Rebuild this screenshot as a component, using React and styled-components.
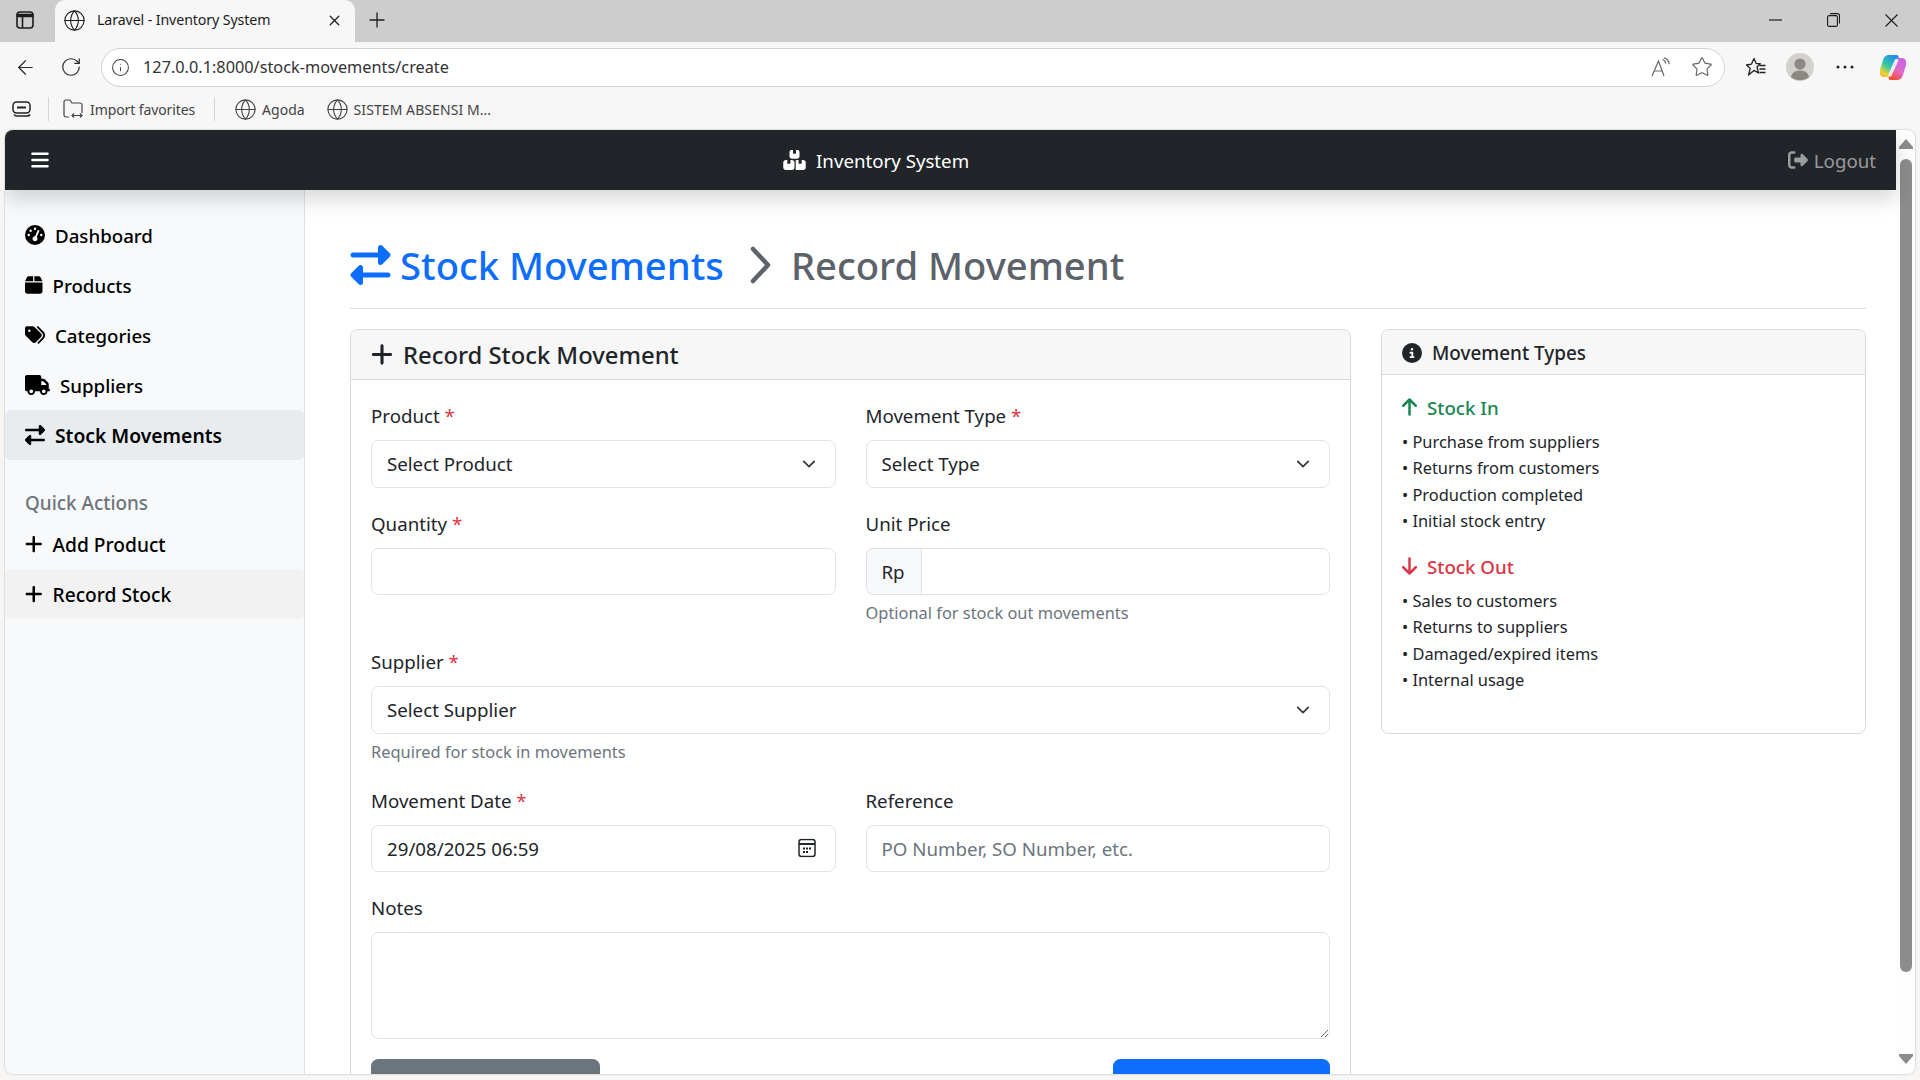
import React from 'react'
import styled, { createGlobalStyle } from 'styled-components'
import { ArrowLeft, Globe, Info, Plus, RotateCw, Star, X } from 'lucide-react'
import {
  FaArrowDown,
  FaArrowLeft,
  FaArrowUp,
  FaBars,
  FaBox,
  FaBoxesStacked,
  FaCircleInfo,
  FaFloppyDisk,
  FaGaugeHigh,
  FaPlus,
  FaRightFromBracket,
  FaRightLeft,
  FaTags,
  FaTruck,
} from 'react-icons/fa6'

const GlobalStyle = createGlobalStyle`
  * { box-sizing: border-box; }
  html, body {
    margin: 0;
    width: 1920px;
    height: 1080px;
    overflow: hidden;
    font-family: "Noto Sans", "Open Sans", sans-serif;
    color: #212529;
  }
`

const Window = styled.div`
  width: 1920px;
  height: 1080px;
  display: flex;
  flex-direction: column;
  background: #f7f6f5;
  overflow: hidden;
`

const TabStrip = styled.div`
  height: 42px;
  flex: none;
  display: flex;
  align-items: center;
  padding-left: 16px;
  background: #cdcdcd;
  color: #1c1c1c;
`

const TabToggle = styled.span`
  display: flex;
  width: 39px;
  padding-bottom: 2px;
`

const Tab = styled.div`
  width: 300px;
  height: 42px;
  display: flex;
  align-items: center;
  padding: 0 12px 2px 8px;
  background: #f7f7f7;
  border-radius: 10px 10px 0 0;
`

const TabTitle = styled.span`
  flex: 1;
  margin: 0 0 1px 11px;
  font-size: 14.2px;
  letter-spacing: -0.1px;
`

const NewTab = styled.span`
  display: flex;
  margin-left: 10px;
  padding-bottom: 2px;
`

const WindowControls = styled.div`
  margin-left: auto;
  display: flex;
  gap: 45px;
  padding: 0 22px 2px 0;
  align-items: center;
`

const Toolbar = styled.div`
  height: 46px;
  flex: none;
  display: flex;
  align-items: center;
  padding: 4px 0 0 14px;
  background: #f7f7f7;
  color: #2b2b2b;
`

const ToolButton = styled.span`
  display: flex;
  margin-left: ${(p) => p.$before || 0}px;
  margin-right: ${(p) => p.$gap || 0}px;
`

const AddressBar = styled.div`
  width: 1624px;
  height: 39px;
  display: flex;
  align-items: center;
  padding: 0 11px 0 9px;
  background: #fff;
  border: 1.5px solid #d2d2d2;
  border-radius: 20px;
`

const Url = styled.span`
  flex: 1;
  margin-left: 13px;
  font-size: 16.3px;
  color: #333;
`

const BarIcons = styled.div`
  display: flex;
  align-items: center;
  gap: 20px;
  color: #666;
`

const ToolIcons = styled.div`
  display: flex;
  align-items: center;
  margin-left: 20px;
`

const Bookmarks = styled.div`
  height: 42px;
  flex: none;
  display: flex;
  align-items: center;
  padding-left: 12px;
  background: #f7f7f7;
  color: #444;
`

const Divider = styled.span`
  width: 1px;
  height: 24px;
  background: #d4d4d4;
  margin: 0 ${(p) => p.$right}px 0 ${(p) => p.$left}px;
`

const Bookmark = styled.span`
  display: flex;
  align-items: center;
  gap: ${(p) => p.$iconGap || 7}px;
  font-size: 14px;
  letter-spacing: ${(p) => p.$track ?? -0.1}px;
  margin-right: ${(p) => p.$gap || 0}px;
`

const PageFrame = styled.div`
  width: 1910px;
  height: 944px;
  flex: none;
  margin-left: 5px;
  display: flex;
  background: #fff;
  border-radius: 8px;
  overflow: hidden;
  box-shadow: 0 0 2px rgba(0, 0, 0, 0.35);
`

const Viewport = styled.div`
  width: 1891px;
  display: flex;
  flex-direction: column;
`

const ScrollTrack = styled.div`
  width: 19px;
  display: flex;
  flex-direction: column;
  align-items: center;
  padding: 9px 0 10px;
  background: #fdfdfd;
  color: #8c8c8c;
`

const ScrollThumb = styled.div`
  width: 12px;
  height: 813px;
  margin-top: 10px;
  border-radius: 6px;
  background: #8c8c8c;
`

const ScrollArrow = styled.svg`
  width: 14px;
  height: 10px;
  margin-top: ${(p) => (p.$down ? 'auto' : 0)};
`

const Navbar = styled.nav`
  height: 60px;
  flex: none;
  position: relative;
  z-index: 2;
  display: flex;
  align-items: center;
  padding: 0 20px 0 26px;
  background: #212529;
  box-shadow: 0 10px 20px rgba(0, 0, 0, 0.15);
  color: rgba(255, 255, 255, 0.55);
  font-size: 18.7px;
`

const Toggler = styled.span`
  display: flex;
  color: #fff;
  svg { width: 18px; height: 20px; }
`

const Brand = styled.span`
  display: flex;
  align-items: center;
  gap: 10px;
  margin-left: 734px;
  color: #fff;
  svg { width: 23px; height: 20px; }
`

const Logout = styled.span`
  display: flex;
  align-items: center;
  gap: 5px;
  margin-left: auto;
  svg { width: 22px; height: 20px; }
`

const Columns = styled.div`
  flex: 1;
  display: flex;
  min-height: 0;
`

const Sidebar = styled.aside`
  width: 300px;
  flex: none;
  padding-top: 20px;
  background: #f8f9fa;
  border-right: 1px solid #dee2e6;
`

const NavLink = styled.a`
  height: 50px;
  display: flex;
  align-items: center;
  gap: 10px;
  padding-left: 20px;
  border-radius: 5px;
  color: #000;
  font-size: ${(p) => p.$size || 18.7}px;
  font-weight: ${(p) => (p.$active ? 600 : 500)};
  background: ${(p) => p.$bg || 'transparent'};
  svg { width: ${(p) => p.$iconWidth || 20}px; height: 20px; flex: none; }
`

const SideHeading = styled.div`
  margin: 28px 0 1px;
  padding-left: 20px;
  height: 30px;
  line-height: 30px;
  color: #6c757d;
  font-size: 18.9px;
  font-weight: 500;
`

const Main = styled.main`
  flex: 1;
  min-width: 0;
  padding: 52px 30px 0 45px;
`

const PageHeader = styled.div`
  display: flex;
  align-items: center;
  height: 67px;
  padding-bottom: 20px;
  border-bottom: 1px solid #dee2e6;
  margin-bottom: 20px;
  font-size: 38.2px;
  font-weight: 500;
  line-height: 46px;
`

const Crumb = styled.span`
  display: flex;
  align-items: center;
  gap: 9px;
  color: #0d6efd;
  svg { width: 41px; height: 40px; }
`

const Chevron = styled.svg`
  width: 24px;
  height: 38px;
  margin: 0 18px 0 25px;
`

const Current = styled.span`
  color: #5c636a;
`

const Grid = styled.div`
  display: grid;
  grid-template-columns: 1001px 485px;
  gap: 30px;
  align-items: start;
`

const Card = styled.section`
  background: #fff;
  border: 1px solid #d9d9d9;
  border-radius: 7.5px;
  overflow: hidden;
`

const CardHeader = styled.div`
  height: ${(p) => (p.$big ? 50 : 45)}px;
  display: flex;
  align-items: center;
  gap: 10px;
  padding: ${(p) => (p.$big ? 0 : 1)}px 20px 0;
  background: #f7f7f7;
  border-bottom: 1px solid #d9d9d9;
  font-size: ${(p) => (p.$big ? 23.8 : 18.9)}px;
  font-weight: 500;
  svg {
    width: ${(p) => (p.$big ? 22 : 20)}px;
    height: ${(p) => (p.$big ? 25 : 20)}px;
    flex: none;
  }
`

const CardBody = styled.div`
  padding: 20px;
`

const FormRow = styled.div`
  display: grid;
  grid-template-columns: 1fr 1fr;
  column-gap: 30px;
`

const Field = styled.div`
  margin-bottom: 20px;
`

const Label = styled.label`
  display: block;
  height: 30px;
  line-height: 31px;
  margin-bottom: 10px;
  font-size: 18.7px;
`

const Required = styled.span`
  color: #dc3545;
`

const Control = styled.div`
  position: relative;
  display: flex;
`

const inputBase = `
  width: 100%;
  height: 47.5px;
  padding: 7.5px 15px;
  border: 1px solid #dee2e6;
  border-radius: 7.5px;
  background: #fff;
  color: #212529;
  font-family: inherit;
  font-size: 18.7px;
  outline: none;
`

const Select = styled.select`
  ${inputBase}
  appearance: none;
`

const Input = styled.input`
  ${inputBase}
  &::placeholder { color: #6c757d; opacity: 1; }
`

const GroupInput = styled(Input)`
  flex: 1;
  width: auto;
  min-width: 0;
  border-radius: 0 7.5px 7.5px 0;
`

const Addon = styled.span`
  width: 55px;
  flex: none;
  display: flex;
  align-items: center;
  padding-left: 15px;
  background: #f8f9fa;
  border: 1px solid #dee2e6;
  border-right: 0;
  border-radius: 7.5px 0 0 7.5px;
  font-size: 18.7px;
`

const TextArea = styled.textarea`
  ${inputBase}
  display: block;
  height: 107px;
  resize: vertical;
`

const ControlIcon = styled.svg`
  position: absolute;
  top: 50%;
  right: ${(p) => p.$right}px;
  transform: translateY(-50%);
  pointer-events: none;
`

const Help = styled.div`
  margin-top: 5px;
  height: 26px;
  line-height: 26px;
  font-size: 16.4px;
  color: #6c757d;
`

const Actions = styled.div`
  display: flex;
  justify-content: space-between;
`

const Button = styled.button`
  width: ${(p) => p.$width}px;
  height: 47.5px;
  display: flex;
  align-items: center;
  padding: 0 17px;
  border: 0;
  border-radius: 7.5px;
  background: ${(p) => p.$bg};
  color: #fff;
  svg { width: 18px; height: 20px; flex: none; }
`

const TypeHeading = styled.h6`
  margin: 0 0 10px;
  display: flex;
  align-items: center;
  gap: 10px;
  height: 24px;
  color: ${(p) => p.$color};
  font-size: 18.7px;
  font-weight: 500;
  svg { width: 15px; height: 20px; }
`

const TypeList = styled.ul`
  list-style: none;
  margin: 0 0 20px;
  padding: 0;
  font-size: 16.4px;
  line-height: 26.25px;
`

const GlobeIcon = () => <Globe size={23} strokeWidth={1.15} />

const TabsIcon = () => (
  <svg width="18" height="18" viewBox="0 0 18 18" fill="none" stroke="#1c1c1c" strokeWidth="1.6">
    <rect x="1" y="1" width="16" height="16" rx="3" />
    <path d="M1.5 3.5h15v2h-15z" fill="#1c1c1c" />
    <path d="M6.5 5v12" />
  </svg>
)

const MinimizeIcon = () => (
  <svg width="13" height="2" viewBox="0 0 13 2"><path d="M0 1h13" stroke="#1c1c1c" strokeWidth="1.2" /></svg>
)

const RestoreIcon = () => (
  <svg width="13" height="14" viewBox="0 0 13 14" fill="none" stroke="#1c1c1c" strokeWidth="1.1">
    <rect x="0.6" y="2.6" width="9.8" height="10.8" rx="1.5" />
    <path d="M3 .6h7.5a2 2 0 0 1 2 2v8" />
  </svg>
)

const CloseIcon = () => (
  <svg width="13" height="13" viewBox="0 0 13 13" stroke="#1c1c1c" strokeWidth="1.1">
    <path d="M.5.5l12 12M12.5.5l-12 12" />
  </svg>
)

const ReadAloudIcon = () => (
  <svg width="20" height="20" viewBox="0 0 20 20" fill="none" stroke="#666" strokeWidth="1.2">
    <path d="M1 19L7.5 4 13 19M3.2 14h8" />
    <path d="M11.5 2.5c2 .6 3 2 3.2 4M13 .8c3 .8 5 3 5.2 6.4" />
  </svg>
)

const FavoritesIcon = () => (
  <svg width="21" height="21" viewBox="0 0 21 21" fill="none" stroke="#222" strokeWidth="1.3" strokeLinejoin="round">
    <path d="M9 1.5l2.3 5.2h4L12 10l1.500 6L9 13.400 3.500 18l1.800-6.600L1.500 8l5-.9z" />
    <path d="M14.500 8.500h6M14.500 12h6M14.500 15.500h6" />
  </svg>
)

const AvatarIcon = () => (
  <svg width="28" height="28" viewBox="0 0 28 28">
    <circle cx="14" cy="14" r="14" fill="#d3d1cd" />
    <circle cx="14" cy="11" r="5.6" fill="#8c8984" />
    <path d="M5 24c1-4.500 4.500-6.500 9-6.500s8 2 9 6.500a14 14 0 0 1-18 0z" fill="#8c8984" />
  </svg>
)

const DotsIcon = () => (
  <svg width="18" height="4" viewBox="0 0 18 4" fill="#222">
    <circle cx="2" cy="2" r="1.5" /><circle cx="9" cy="2" r="1.5" /><circle cx="16" cy="2" r="1.5" />
  </svg>
)

const CopilotIcon = () => (
  <svg width="28" height="27" viewBox="0 0 28 27">
    <defs>
      <linearGradient id="copA" x1="0.7" y1="0" x2="0.15" y2="1">
        <stop offset="0" stopColor="#1f8fee" />
        <stop offset="0.5" stopColor="#35c8a0" />
        <stop offset="0.85" stopColor="#f4d32c" />
        <stop offset="1" stopColor="#f6a83a" />
      </linearGradient>
      <linearGradient id="copB" x1="0.9" y1="0.1" x2="0.3" y2="1">
        <stop offset="0" stopColor="#c963e6" />
        <stop offset="0.55" stopColor="#e268c8" />
        <stop offset="1" stopColor="#f0502e" />
      </linearGradient>
    </defs>
    <path d="M10 1h7c2 0 3 1 2.600 2.500L13.500 18c-1 3-3 5-5.500 5H5c-3 0-5-3-4-7l3-10c.8-3 3-5 6-5z" fill="url(#copA)" />
    <path d="M18 26h-6c-2 0-2.800-1-2.400-2.500L15 9c1-3 3-5 5.500-5H23c3 0 5 3 4 7l-3 10c-.8 3-3 5-6 5z" fill="url(#copB)" />
    <path d="M17.500 6.500L11 21" stroke="#fff" strokeOpacity="0.85" strokeWidth="3.500" strokeLinecap="round" />
  </svg>
)

const SavedIcon = () => (
  <svg width="20" height="18" viewBox="0 0 20 18" fill="none" stroke="#222" strokeWidth="1.5">
    <rect x="1" y="2" width="17" height="11" rx="3.500" />
    <path d="M5 7.500h9" strokeWidth="2" />
    <path d="M2 14.500c.6 1.200 1.500 1.500 3 1.500h10c1.500 0 2.400-.5 3-1.500" />
  </svg>
)

const ImportIcon = () => (
  <svg width="20" height="20" viewBox="0 0 20 20" fill="none" stroke="#444" strokeWidth="1.2">
    <path d="M6 18H3a2 2 0 0 1-2-2V3a2 2 0 0 1 2-2h4l2 3h8a2 2 0 0 1 2 2v8" />
    <path d="M9 16.500h10M11 14.500l-2 2 2 2M17 14.500l2 2-2 2" />
  </svg>
)

const ChevronDown = () => (
  <ControlIcon $right={20} width="14" height="14" viewBox="0 0 16 16" fill="none" stroke="#343a40" strokeWidth="2" strokeLinecap="round" strokeLinejoin="round">
    <path d="M2 5l6 6 6-6" />
  </ControlIcon>
)

const CalendarIcon = () => (
  <ControlIcon $right={20} width="18" height="19" viewBox="0 0 18 19" fill="none" stroke="#212529" strokeWidth="1.5">
    <rect x="1" y="1" width="16" height="17" rx="2.500" />
    <path d="M1 5.500h16" strokeWidth="2" />
    <path d="M5 9h2v2H5zM8 9h2v2H8zM11 9h2v2h-2zM5 12.500h2v2H5zM8 12.500h2v2H8z" fill="#212529" stroke="none" />
  </ControlIcon>
)

const navItems = [
  { icon: <FaGaugeHigh />, label: 'Dashboard' },
  { icon: <FaBox />, label: 'Products', width: 17.5 },
  { icon: <FaTags />, label: 'Categories' },
  { icon: <FaTruck />, label: 'Suppliers', width: 25 },
  { icon: <FaRightLeft />, label: 'Stock Movements', active: true, bg: '#e9ecef', size: 19.3 },
]

const stockIn = ['Purchase from suppliers', 'Returns from customers', 'Production completed', 'Initial stock entry']
const stockOut = ['Sales to customers', 'Returns to suppliers', 'Damaged/expired items', 'Internal usage']

const BrowserChrome = () => (
  <>
    <TabStrip>
      <TabToggle><TabsIcon /></TabToggle>
      <Tab>
        <GlobeIcon />
        <TabTitle>Laravel - Inventory System</TabTitle>
        <X size={17} strokeWidth={1.8} />
      </Tab>
      <NewTab><Plus size={24} strokeWidth={1.3} /></NewTab>
      <WindowControls>
        <MinimizeIcon />
        <RestoreIcon />
        <CloseIcon />
      </WindowControls>
    </TabStrip>
    <Toolbar>
      <ToolButton $gap={23}><ArrowLeft size={23} strokeWidth={1.3} /></ToolButton>
      <ToolButton $gap={19}><RotateCw size={22} strokeWidth={1.3} /></ToolButton>
      <AddressBar>
        <Info size={19} strokeWidth={1.3} color="#444" />
        <Url>127.0.0.1:8000/stock-movements/create</Url>
        <BarIcons>
          <ReadAloudIcon />
          <Star size={22} strokeWidth={1.3} />
        </BarIcons>
      </AddressBar>
      <ToolIcons>
        <FavoritesIcon />
        <ToolButton $before={20}><AvatarIcon /></ToolButton>
        <ToolButton $before={22}><DotsIcon /></ToolButton>
        <ToolButton $before={25}><CopilotIcon /></ToolButton>
      </ToolIcons>
    </Toolbar>
    <Bookmarks>
      <SavedIcon />
      <Divider $left={16} $right={14} />
      <Bookmark><ImportIcon />Import favorites</Bookmark>
      <Divider $left={19} $right={19} />
      <Bookmark $iconGap={5} $gap={21} $track={0}><GlobeIcon />Agoda</Bookmark>
      <Bookmark $iconGap={5} $track={0.07}><GlobeIcon />SISTEM ABSENSI M...</Bookmark>
    </Bookmarks>
  </>
)

const App = () => {
  return (
    <Window>
      <GlobalStyle />
      <BrowserChrome />
      <PageFrame>
        <Viewport>
          <Navbar>
            <Toggler><FaBars /></Toggler>
            <Brand><FaBoxesStacked />Inventory System</Brand>
            <Logout><FaRightFromBracket />Logout</Logout>
          </Navbar>
          <Columns>
            <Sidebar>
              {navItems.map((item) => (
                <NavLink key={item.label} $active={item.active} $bg={item.bg} $iconWidth={item.width} $size={item.size}>
                  {item.icon}{item.label}
                </NavLink>
              ))}
              <SideHeading>Quick Actions</SideHeading>
              <NavLink $iconWidth={17.5} $size={19.2}><FaPlus />Add Product</NavLink>
              <NavLink $iconWidth={17.5} $size={19.2} $bg="#f2f2f2"><FaPlus />Record Stock</NavLink>
            </Sidebar>
            <Main>
              <PageHeader>
                <Crumb><FaRightLeft />Stock Movements</Crumb>
                <Chevron viewBox="0 0 24 38" fill="none" stroke="#5c636a" strokeWidth="4.500" strokeLinecap="round" strokeLinejoin="round">
                  <path d="M4 3l15 16L4 35" />
                </Chevron>
                <Current>Record Movement</Current>
              </PageHeader>
              <Grid>
                <Card>
                  <CardHeader $big><FaPlus />Record Stock Movement</CardHeader>
                  <CardBody>
                    <FormRow>
                      <Field>
                        <Label>Product <Required>*</Required></Label>
                        <Control>
                          <Select defaultValue=""><option value="">Select Product</option></Select>
                          <ChevronDown />
                        </Control>
                      </Field>
                      <Field>
                        <Label>Movement Type <Required>*</Required></Label>
                        <Control>
                          <Select defaultValue=""><option value="">Select Type</option></Select>
                          <ChevronDown />
                        </Control>
                      </Field>
                    </FormRow>
                    <FormRow>
                      <Field>
                        <Label>Quantity <Required>*</Required></Label>
                        <Input />
                      </Field>
                      <Field>
                        <Label>Unit Price</Label>
                        <Control>
                          <Addon>Rp</Addon>
                          <GroupInput />
                        </Control>
                        <Help>Optional for stock out movements</Help>
                      </Field>
                    </FormRow>
                    <Field>
                      <Label>Supplier <Required>*</Required></Label>
                      <Control>
                        <Select defaultValue=""><option value="">Select Supplier</option></Select>
                        <ChevronDown />
                      </Control>
                      <Help>Required for stock in movements</Help>
                    </Field>
                    <FormRow>
                      <Field>
                        <Label>Movement Date <Required>*</Required></Label>
                        <Control>
                          <Input readOnly value="29/08/2025 06:59" />
                          <CalendarIcon />
                        </Control>
                      </Field>
                      <Field>
                        <Label>Reference</Label>
                        <Input placeholder="PO Number, SO Number, etc." />
                      </Field>
                    </FormRow>
                    <Field>
                      <Label>Notes</Label>
                      <TextArea />
                    </Field>
                    <Actions>
                      <Button $width={229} $bg="#6c757d"><FaArrowLeft /></Button>
                      <Button $width={217} $bg="#0d6efd"><FaFloppyDisk /></Button>
                    </Actions>
                  </CardBody>
                </Card>
                <Card>
                  <CardHeader><FaCircleInfo />Movement Types</CardHeader>
                  <CardBody>
                    <TypeHeading $color="#198754"><FaArrowUp />Stock In</TypeHeading>
                    <TypeList>
                      {stockIn.map((line) => <li key={line}>• {line}</li>)}
                    </TypeList>
                    <TypeHeading $color="#dc3545"><FaArrowDown />Stock Out</TypeHeading>
                    <TypeList>
                      {stockOut.map((line) => <li key={line}>• {line}</li>)}
                    </TypeList>
                  </CardBody>
                </Card>
              </Grid>
            </Main>
          </Columns>
        </Viewport>
        <ScrollTrack>
          <ScrollArrow viewBox="0 0 14 10" fill="currentColor"><path d="M7 0l7 8v2H0V8z" /></ScrollArrow>
          <ScrollThumb />
          <ScrollArrow $down viewBox="0 0 14 10" fill="currentColor"><path d="M0 0h14v2l-7 8-7-8z" /></ScrollArrow>
        </ScrollTrack>
      </PageFrame>
    </Window>
  )
}

export default App
